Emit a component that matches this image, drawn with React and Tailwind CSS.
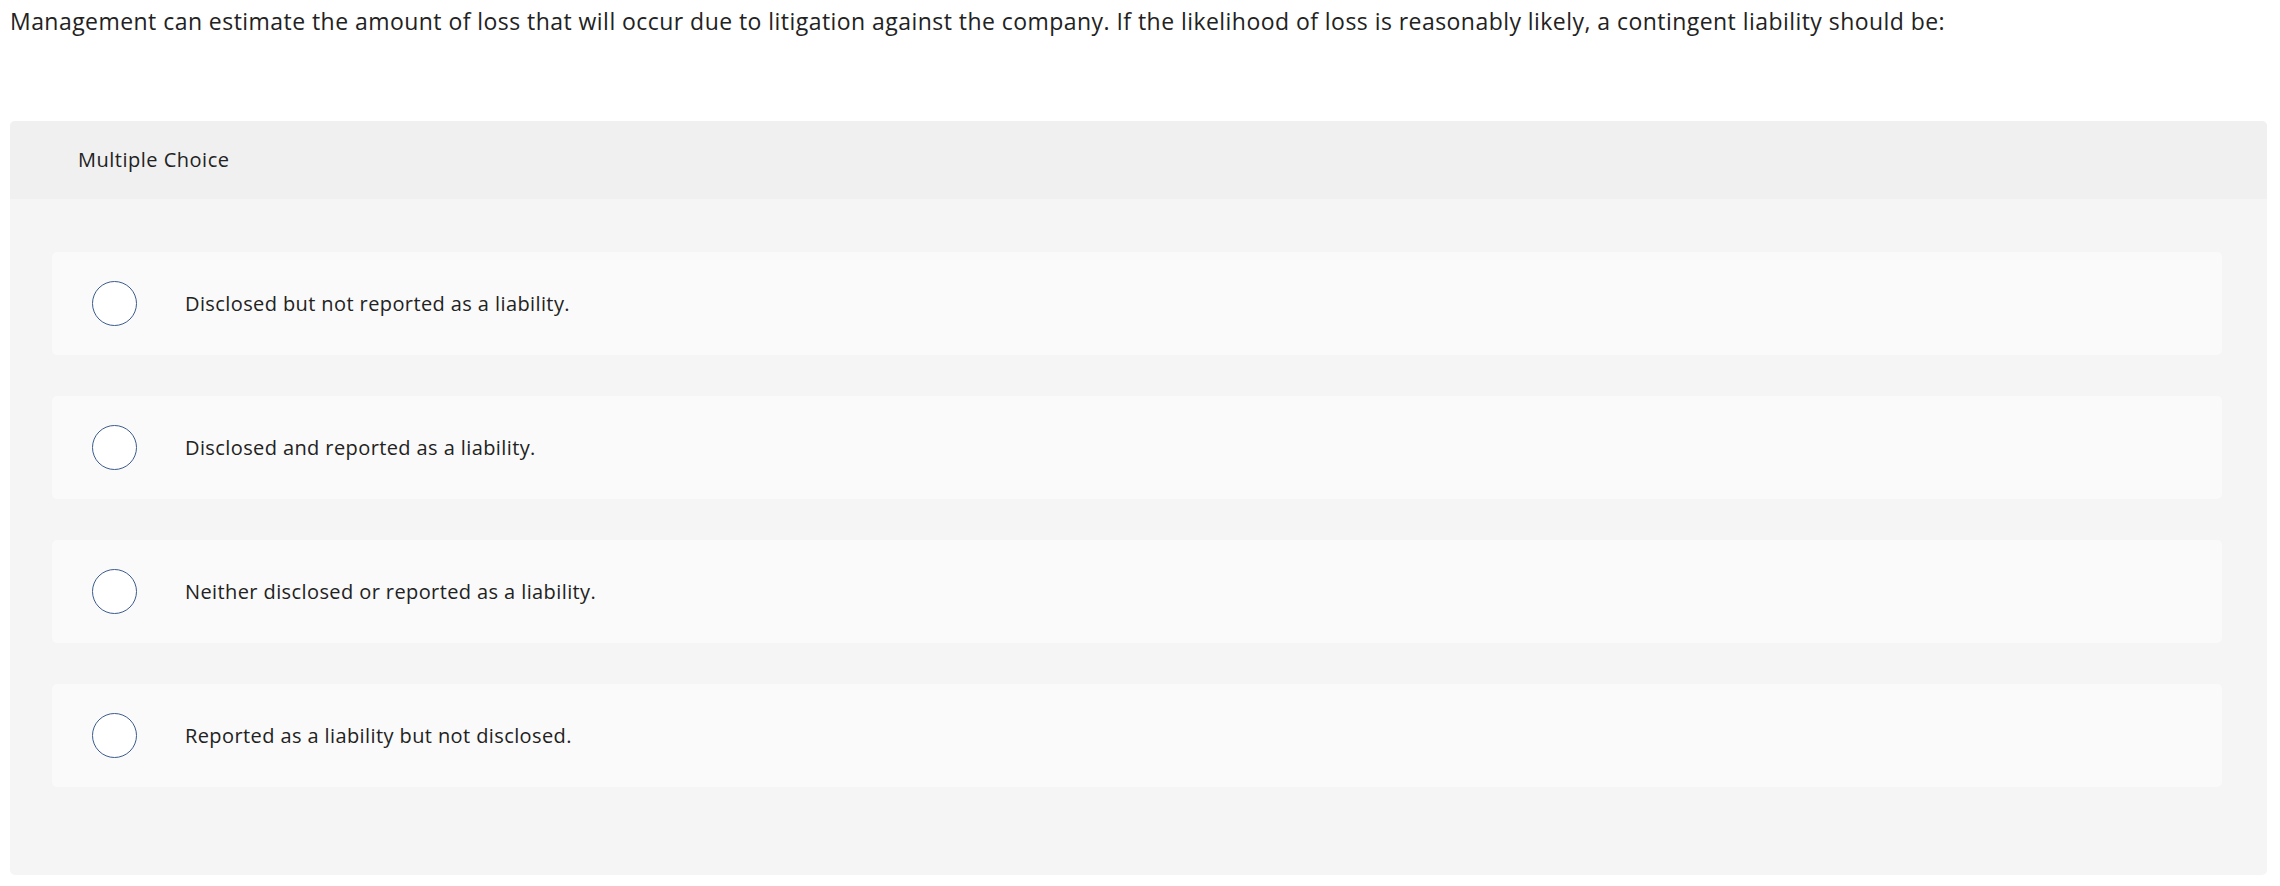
import React from 'react';

const options = [
  'Disclosed but not reported as a liability.',
  'Disclosed and reported as a liability.',
  'Neither disclosed or reported as a liability.',
  'Reported as a liability but not disclosed.',
];

const App = () => {
  return (
    <div className="min-h-screen bg-white text-[#222222] font-['Open_Sans',sans-serif]">
      <p className="pl-[10px] pt-[6px] text-[23px] leading-[30px] tracking-[0.45px]">
        Management can estimate the amount of loss that will occur due to litigation against the company. If the likelihood of loss is reasonably likely, a contingent liability should be:
      </p>

      <div className="ml-[10px] mr-[13px] mt-[85px] rounded-[5px] overflow-hidden bg-[#f5f5f5]">
        <div className="h-[78px] flex items-center pl-[68px] bg-[#f0f0f0] text-[20px] tracking-[0.5px]">
          Multiple Choice
        </div>
        <div className="flex flex-col gap-[41px] pt-[53px] pb-[88px] pl-[42px] pr-[45px]">
          {options.map((o) => (
            <label key={o} className="h-[103px] flex items-center rounded-[5px] bg-[#fafafa] pl-[40px] cursor-pointer">
              <span className="w-[45px] h-[45px] rounded-full border border-[#3b5b8e] bg-white shrink-0" />
              <span className="ml-[48px] text-[20px] tracking-[0.4px]">{o}</span>
            </label>
          ))}
        </div>
      </div>
    </div>
  );
};

export default App;
